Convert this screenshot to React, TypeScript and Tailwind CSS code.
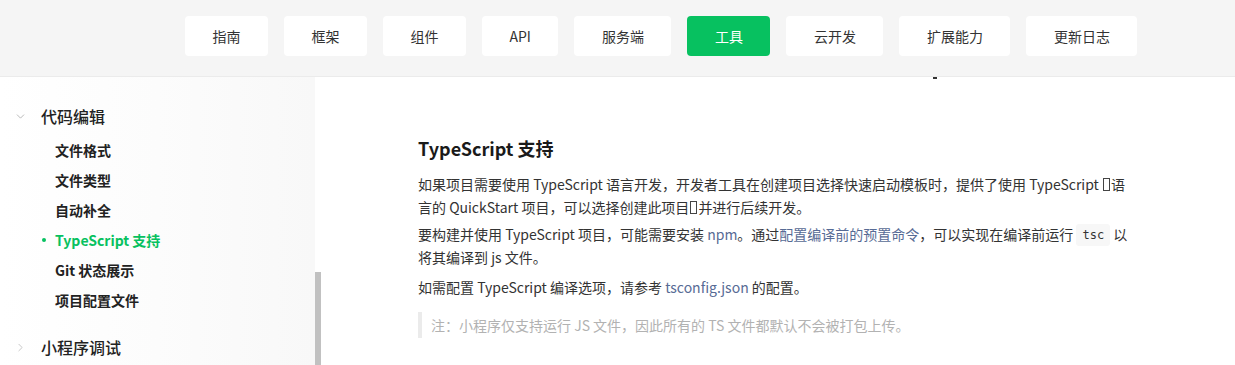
import React from "react";
import { ChevronDown, ChevronRight } from "lucide-react";

const navs = ["指南", "框架", "组件", "API", "服务端", "工具", "云开发", "扩展能力", "更新日志"];

const Tofu = () => (
  <span className="inline-block w-[7px] h-[13px] border border-[#444] align-[-1px] mx-[1px]" />
);

const items = ["文件格式", "文件类型", "自动补全", "TypeScript 支持", "Git 状态展示", "项目配置文件"];

export default function App() {
  return (
    <div
      className="w-[1235px] h-[365px] overflow-hidden bg-white text-[#333]"
      style={{ fontFamily: '"Noto Sans CJK SC", sans-serif' }}
    >
      <header className="h-[77px] bg-[#f5f5f5] border-b border-[#ebebeb] flex items-start pt-4 pl-[185px] gap-4">
        {navs.map((n) => (
          <div
            key={n}
            className={
              n === "工具"
                ? "h-10 px-[27.5px] rounded-[4px] bg-[#07c160] text-white text-[14px] flex items-center"
                : "h-10 px-[27.5px] rounded-[4px] bg-white text-[#333] text-[14px] flex items-center"
            }
          >
            {n}
          </div>
        ))}
      </header>
      <div className="flex h-[288px] relative">
        <aside className="w-[315px] h-full bg-gradient-to-r from-white via-[#fcfcfc] to-[#f8f8f8] pt-[24px]">
          <div className="flex items-center h-[30px]">
            <ChevronDown size={13} strokeWidth={1.5} className="text-[#aaa] ml-[14px]" />
            <span className="ml-[14px] text-[16px] font-medium text-[#222]">代码编辑</span>
          </div>
          <div className="mt-1">
            {items.map((it) => (
              <div key={it} className="h-[30px] flex items-center relative pl-[55px]">
                {it === "TypeScript 支持" ? (
                  <>
                    <span className="absolute left-[42px] top-[13px] w-[4px] h-[4px] rounded-full bg-[#07c160]" />
                    <span className="text-[14px] font-bold text-[#07c160]">{it}</span>
                  </>
                ) : (
                  <span className="text-[14px] font-bold text-[#222]">{it}</span>
                )}
              </div>
            ))}
          </div>
          <div className="flex items-center h-[30px] mt-[17px]">
            <ChevronRight size={13} strokeWidth={1.5} className="text-[#bbb] ml-[14px]" />
            <span className="ml-[14px] text-[16px] font-medium text-[#222]">小程序调试</span>
          </div>
        </aside>
        <div className="w-[6px] h-full flex flex-col">
          <div className="h-[195px]" />
          <div className="flex-1 bg-[#c1c1c1]" />
        </div>
        <main className="flex-1 pl-[97px] pt-[57px] text-[14px] relative">
          <span className="absolute left-[612px] top-0 w-[4px] h-[2px] bg-[#333]" />
          <h2 className="text-[18px] font-bold text-[#1a1a1a] leading-[28px]">TypeScript 支持</h2>
          <p className="mt-[11px] leading-[23px] whitespace-nowrap">
            如果项目需要使用 TypeScript 语言开发，开发者工具在创建项目选择快速启动模板时，提供了使用 TypeScript <Tofu />语
            <br />
            言的 QuickStart 项目，可以选择创建此项目<Tofu />并进行后续开发。
          </p>
          <p className="mt-[4px] leading-[23px] whitespace-nowrap">
            要构建并使用 TypeScript 项目，可能需要安装 <span className="text-[#576b95]">npm</span>。通过
            <span className="text-[#576b95]">配置编译前的预置命令</span>，可以实现在编译前运行{" "}
            <code
              className="inline-block align-middle bg-[#f7f7f7] rounded-[3px] px-[6px] h-[22px] leading-[22px] text-[12px] text-[#333] -mt-[2px]"
              style={{ fontFamily: '"DejaVu Sans Mono", monospace' }}
            >
              tsc
            </code>{" "}
            以
            <br />
            将其编译到 js 文件。
          </p>
          <p className="mt-[7px] leading-[23px] whitespace-nowrap">
            如需配置 TypeScript 编译选项，请参考 <span className="text-[#576b95]">tsconfig.json</span> 的配置。
          </p>
          <div className="mt-[13px] border-l-4 border-[#ebebeb] pl-[9px] h-[26px] flex items-center text-[14px] text-[#b2b2b2] whitespace-nowrap">
            注：小程序仅支持运行 JS 文件，因此所有的 TS 文件都默认不会被打包上传。
          </div>
        </main>
      </div>
    </div>
  );
}
